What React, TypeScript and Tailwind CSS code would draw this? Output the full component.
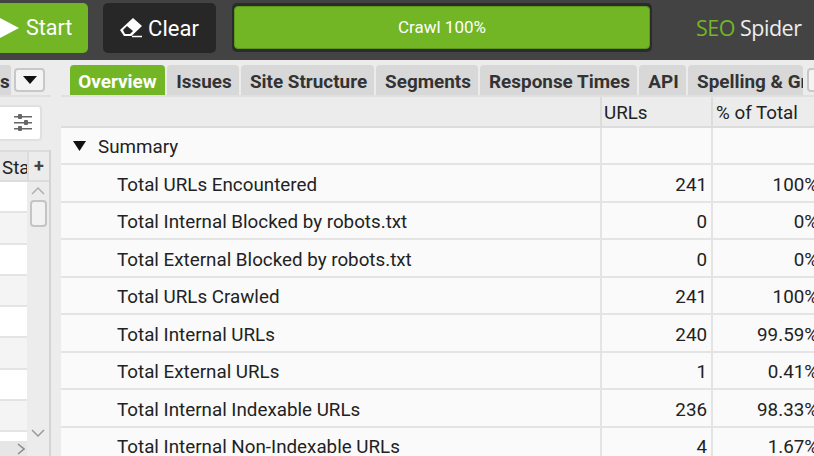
import React from "react";

const rows: [string, string, string][] = [
  ["Total URLs Encountered", "241", "100%"],
  ["Total Internal Blocked by robots.txt", "0", "0%"],
  ["Total External Blocked by robots.txt", "0", "0%"],
  ["Total URLs Crawled", "241", "100%"],
  ["Total Internal URLs", "240", "99.59%"],
  ["Total External URLs", "1", "0.41%"],
  ["Total Internal Indexable URLs", "236", "98.33%"],
  ["Total Internal Non-Indexable URLs", "4", "1.67%"],
];

const tabs: [string, string][] = [
  ["Issues", "w-[72px]"],
  ["Site Structure", "w-[133px]"],
  ["Segments", "w-[102px]"],
  ["Response Times", "w-[157px]"],
  ["API", "w-[47px]"],
];

function Row({ a, b, c, h, indent }: { a: React.ReactNode; b: string; c: string; h: string; indent: string }) {
  return (
    <div className={`flex ${h} border-b-2 border-[#e4e4e4] text-[18.8px] text-[#222] bg-[#fafafa]`}>
      <div className={`w-[539px] flex items-center pt-[4px] ${indent}`}>{a}</div>
      <div className="w-[111px] border-l-2 border-[#e4e4e4] flex items-center justify-end pr-[4px] pt-[4px]">{b}</div>
      <div className="flex-1 border-l-2 border-[#e4e4e4] flex items-center justify-end whitespace-nowrap -mr-[4px] pt-[4px]">{c}</div>
    </div>
  );
}

export default function App() {
  return (
    <div className="w-[814px] h-[456px] overflow-hidden bg-[#ececec] font-['Roboto',sans-serif]">
      <div className="h-[60px] bg-[#434343] flex items-start pt-[3px] overflow-hidden">
        <div className="w-[88px] h-[50px] bg-[#72b626] rounded-r-[5px] flex items-center text-white text-[21.5px] shrink-0">
          <svg width="20" height="24" viewBox="0 0 20 24" className="mr-[6px]"><path d="M-2 1 L19 12 L-2 23 Z" fill="#fff" /></svg>
          Start
        </div>
        <div className="ml-[15px] w-[113px] h-[50px] bg-[#272727] rounded-[5px] flex items-center justify-center text-white text-[22px] shrink-0">
          <svg width="24" height="20" viewBox="0 0 24 20" className="mr-[4px]">
            <path d="M13 0 L22 8 L11.5 18 L4 18 L0 12 Z" fill="#fff" />
            <path d="M3 12 L7 8 L13 13 L10 16 L5 16 Z" fill="#272727" />
            <path d="M12 18.5 L22 18.5" stroke="#fff" strokeWidth="1.5" />
          </svg>
          Clear
        </div>
        <div className="ml-[16px] w-[420px] h-[49px] bg-[#2b2b2b] rounded-[5px] px-[2px] pt-[3px] pb-[3px] shrink-0 flex">
          <div className="flex-1 bg-[#72b626] rounded-[4px] border border-[#5d9a1c] flex items-center justify-center text-white text-[17px]">Crawl 100%</div>
        </div>
        <div className="ml-[44px] mt-[9px] text-[21.5px] whitespace-nowrap font-['Open_Sans',sans-serif] tracking-[-0.5px]">
          <span className="text-[#72b626]">SEO</span> <span className="text-[#eeeeee]">Spider</span>
        </div>
      </div>

      <div className="flex h-[396px]">
        <div className="w-[51px] shrink-0 flex flex-col overflow-hidden">
          <div className="h-[37px] flex items-end border-b-2 border-[#e0e0e0] shrink-0">
            <div className="h-[30px] w-[11px] bg-[#d8d8d8] rounded-tr-[3px] text-[18.9px] font-bold text-[#333] flex items-center justify-start overflow-hidden shrink-0 pt-[4px]">s</div>
            <div className="w-[31px] h-[24px] mb-[3px] ml-[3px] border-2 border-[#c8c8c8] rounded-[4px] bg-[#f4f4f4] flex items-center justify-center shrink-0">
              <svg width="14" height="8" viewBox="0 0 14 8"><path d="M0 0 H14 L7 8 Z" fill="#111" /></svg>
            </div>
          </div>
          <div className="h-[53px] shrink-0 flex items-start pt-[8px]">
            <div className="w-[42px] h-[36px] bg-white border-2 border-[#e0e0e0] border-l-0 rounded-r-[4px] flex items-center justify-end pr-[7px]">
              <svg width="20" height="20" viewBox="0 0 20 20" fill="#666">
                <rect x="1" y="3" width="18" height="1.5" /><rect x="5" y="1" width="4" height="5" rx="1" />
                <rect x="1" y="9" width="18" height="1.5" /><rect x="11" y="7" width="4" height="5" rx="1" />
                <rect x="1" y="15" width="18" height="1.5" /><rect x="5" y="13" width="4" height="5" rx="1" />
              </svg>
            </div>
          </div>
          <div className="flex-1 flex border-r-2 border-[#d4d4d4] min-h-0">
            <div className="w-[27px] shrink-0 flex flex-col">
              <div className="h-[32px] shrink-0 bg-[#e8e8e8] border-b-2 border-t-2 border-[#dcdcdc] text-[18.8px] text-[#222] flex items-center overflow-hidden pl-[2px] pt-[4px]">Sta</div>
              {[0, 1, 2, 3, 4, 5, 6, 7].map((i) => (
                <div key={i} className={`h-[31.3px] shrink-0 border-b-2 border-[#e4e4e4] ${i % 2 ? "bg-[#f4f4f4]" : "bg-white"}`} />
              ))}
              <div className="h-[9px] shrink-0 bg-white" />
              <div className="flex-1 bg-[#e6e6e6] flex items-center justify-end pr-[2px]">
                <svg width="8" height="12" viewBox="0 0 8 12"><path d="M1 1 L7 6 L1 11" stroke="#8a8a8a" strokeWidth="1.5" fill="none" /></svg>
              </div>
            </div>
            <div className="flex-1 flex flex-col items-center bg-[#ececec]">
              <div className="w-full h-[32px] shrink-0 border-t-2 border-b-2 border-l-2 border-[#dcdcdc] flex items-center justify-center text-[18px] font-bold text-[#444] leading-none">+</div>
              <svg width="14" height="8" viewBox="0 0 14 8" className="mt-[5px]"><path d="M1 7 L7 1 L13 7" stroke="#b0b0b0" strokeWidth="1.5" fill="none" /></svg>
              <div className="w-[17px] h-[27px] mt-[5px] border-2 border-[#c4c4c4] rounded-[4px] bg-[#f2f2f2]" />
              <div className="flex-1" />
              <svg width="14" height="8" viewBox="0 0 14 8" className="mb-[19px]"><path d="M1 1 L7 7 L13 1" stroke="#999" strokeWidth="1.5" fill="none" /></svg>
            </div>
          </div>
        </div>

        <div className="w-[10px] shrink-0" />

        <div className="flex-1 min-w-0 flex flex-col">
          <div className="h-[37px] shrink-0 flex items-end gap-[2px] pl-[9px] text-[18.9px] font-bold text-[#333] overflow-hidden whitespace-nowrap border-b-2 border-[#e0e0e0]">
            <div className="w-[95px] h-[30px] bg-[#72b626] text-white rounded-t-[4px] flex items-center justify-center shrink-0 pt-[4px]">Overview</div>
            {tabs.map(([t, w]) => (
              <div key={t} className={`${w} h-[30px] bg-[#d8d8d8] rounded-t-[4px] flex items-center justify-center shrink-0 pt-[4px] pl-[2px]`}>{t}</div>
            ))}
            <div className="w-[115px] h-[30px] bg-[#d8d8d8] rounded-t-[4px] flex items-center pl-[9px] shrink-0 overflow-hidden pt-[4px]">Spelling &amp; Grammar</div>
            <div className="w-[20px] h-[24px] mb-[3px] ml-[2px] border-2 border-[#c8c8c8] rounded-[4px] bg-[#f4f4f4] shrink-0" />
          </div>
          <div className="h-[31px] shrink-0 flex bg-[#ececec] border-b-2 border-[#dcdcdc] text-[18.8px] text-[#222]">
            <div className="w-[539px]" />
            <div className="w-[111px] border-l-2 border-[#dcdcdc] flex items-center pl-[2px] pt-[3px]">URLs</div>
            <div className="flex-1 border-l-2 border-[#dcdcdc] flex items-center pl-[3px] pt-[3px] whitespace-nowrap">% of Total</div>
          </div>
          <div className="flex-1 min-h-0 overflow-hidden bg-[#fafafa]">
            <Row
              h="h-[37px]"
              indent="pl-[12px]"
              b=""
              c=""
              a={
                <>
                  <svg width="13" height="10" viewBox="0 0 13 10" className="mr-[12px] -mt-[4px]"><path d="M0 0 H13 L6.5 10 Z" fill="#111" /></svg>
                  Summary
                </>
              }
            />
            {rows.map(([a, b, c], i) => (
              <Row key={a} a={a} b={b} c={c} h={i % 2 ? "h-[37px]" : "h-[38px]"} indent="pl-[56px]" />
            ))}
          </div>
        </div>
      </div>
    </div>
  );
}
